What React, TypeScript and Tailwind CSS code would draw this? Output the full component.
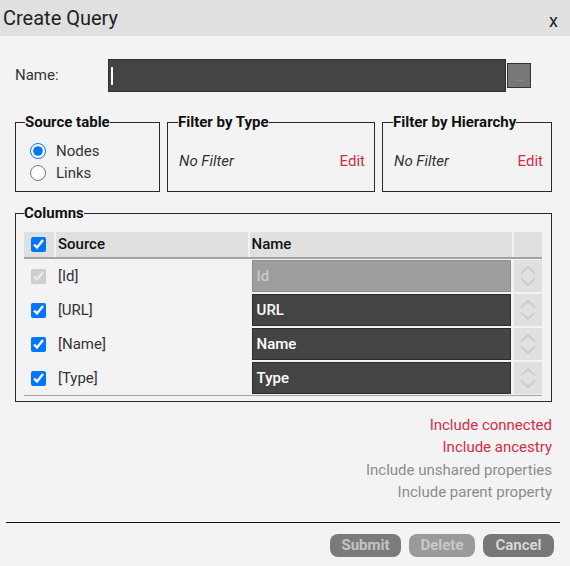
import React from "react";

function Spinner() {
  return (
    <svg width="18" height="24" viewBox="0 0 18 24" fill="none">
      <path d="M2 9.5 L9 3 L16 9.5" stroke="#c8c8c8" strokeWidth="1.5" />
      <path d="M2 14.5 L9 21 L16 14.5" stroke="#c8c8c8" strokeWidth="1.5" />
    </svg>
  );
}

const rows = [
  { src: "[Id]", name: "Id", disabled: true },
  { src: "[URL]", name: "URL", disabled: false },
  { src: "[Name]", name: "Name", disabled: false },
  { src: "[Type]", name: "Type", disabled: false },
];

export default function App() {
  return (
    <div className="w-[570px] h-[566px] bg-[#f3f3f3] font-['Roboto',sans-serif] text-[#222] flex flex-col">
      <div className="h-[36px] bg-[#e0e0e0] flex items-center justify-between pl-[3px] pr-[12px]">
        <span className="text-[20px] leading-none text-[#222]">Create Query</span>
        <span className="text-[18px] leading-none mt-[5px] text-[#222]">x</span>
      </div>

      <div className="px-[15px] flex flex-col">
        {/* Name row */}
        <div className="mt-[23px] flex items-center h-[33px]">
          <span className="w-[93px] text-[15px] text-[#333]">Name:</span>
          <div className="w-[398px] h-[33px] bg-[#444] border border-[#2e2e2e] flex items-center pl-[2px]">
            <div className="w-[2px] h-[18px] bg-white" />
          </div>
          <div className="ml-[1px] w-[24px] h-[25px] bg-[#777] border border-[#333] flex items-end justify-center pb-[4px]">
            <span className="text-[8px] leading-none text-[#bbb] tracking-[1px]">...</span>
          </div>
        </div>

        {/* Filters row */}
        <div className="mt-[22px] flex gap-[7px]">
          <fieldset className="w-[145px] h-[78px] border border-[#2a2a2a]">
            <legend className="ml-[9px] text-[15px] font-bold leading-[16px] text-[#111]">Source table</legend>
            <div className="pt-[10px] pl-[14px] flex flex-col">
              <label className="h-[22px] flex items-center gap-[10px] text-[15px] text-[#333]">
                <input type="radio" name="src" defaultChecked className="w-[16px] h-[16px] m-0" />
                Nodes
              </label>
              <label className="h-[22px] flex items-center gap-[10px] text-[15px] text-[#333]">
                <input type="radio" name="src" className="w-[16px] h-[16px] m-0" />
                Links
              </label>
            </div>
          </fieldset>
          <fieldset className="w-[208px] h-[78px] border border-[#2a2a2a]">
            <legend className="ml-[10px] text-[15px] font-bold leading-[16px] text-[#111]">Filter by Type</legend>
            <div className="h-[61px] flex items-center justify-between pl-[11px] pr-[9px] text-[15px] pt-[2px]">
              <span className="italic text-[#333]">No Filter</span>
              <span className="text-[#d22d47]">Edit</span>
            </div>
          </fieldset>
          <fieldset className="w-[170px] h-[78px] border border-[#2a2a2a]">
            <legend className="ml-[10px] text-[15px] font-bold leading-[16px] text-[#111]">Filter by Hierarchy</legend>
            <div className="h-[61px] flex items-center justify-between pl-[11px] pr-[8px] text-[15px] pt-[2px]">
              <span className="italic text-[#333]">No Filter</span>
              <span className="text-[#d22d47]">Edit</span>
            </div>
          </fieldset>
        </div>

        {/* Columns */}
        <fieldset className="mt-[13px] w-[537px] h-[197px] border border-[#2a2a2a]">
          <legend className="ml-[8px] text-[15px] font-bold leading-[16px] text-[#111]">Columns</legend>
          <div className="pt-[11px] pl-[8px] w-[526px] flex flex-col">
            <div className="h-[25px] flex gap-[2px] text-[15px] font-medium text-[#111]">
              <div className="w-[30px] bg-[#e0e0e0] flex items-center pl-[7px]">
                <input type="checkbox" defaultChecked className="w-[15px] h-[15px] m-0" />
              </div>
              <div className="w-[192px] bg-[#e0e0e0] flex items-center pl-[2px]">Source</div>
              <div className="w-[263px] bg-[#e0e0e0] flex items-center pl-[2px]">Name</div>
              <div className="w-[28px] bg-[#e0e0e0]" />
            </div>
            <div className="h-[2px] w-[518px] bg-[#a3a3a3]" />
            <div className="mt-[1px] flex flex-col gap-[2px]">
              {rows.map((r) => (
                <div key={r.src} className="h-[32px] flex gap-[2px] text-[15px]">
                  <div className="w-[30px] flex items-center pl-[7px]">
                    <input
                      type="checkbox"
                      defaultChecked
                      disabled={r.disabled}
                      className="w-[15px] h-[15px] m-0"
                    />
                  </div>
                  <div className="w-[192px] flex items-center pl-[2px] text-[#333]">{r.src}</div>
                  <div className="w-[263px] flex items-center pl-[2px]">
                    <div
                      className={
                        r.disabled
                          ? "w-[259px] h-[32px] bg-[#9e9e9e] border border-[#8e8e8e] flex items-center pl-[4px] font-medium text-[#c9c9c9]"
                          : "w-[259px] h-[32px] bg-[#444] border border-[#2b2b2b] flex items-center pl-[4px] font-medium text-white"
                      }
                    >
                      {r.name}
                    </div>
                  </div>
                  <div className="w-[28px] bg-[#e0e0e0] flex items-center justify-center">
                    <Spinner />
                  </div>
                </div>
              ))}
            </div>
            <div className="mt-[1px] h-[1px] w-[518px] bg-[#a3a3a3]" />
          </div>
        </fieldset>

        {/* Include links */}
        <div className="mt-[12px] w-[537px] flex flex-col items-end text-[15px] leading-[22.3px]">
          <span className="text-[#d22d47]">Include connected</span>
          <span className="text-[#d22d47]">Include ancestry</span>
          <span className="text-[#8c8c8c]">Include unshared properties</span>
          <span className="text-[#8c8c8c]">Include parent property</span>
        </div>
      </div>

      <div className="mt-[19px] ml-[6px] w-[554px] h-[1px] bg-[#111]" />

      <div className="mt-[11px] flex justify-end gap-[8px] pr-[16px]">
        <div className="w-[71px] h-[23px] rounded-[8px] bg-[#7b7b7b] flex items-center justify-center text-[15px] font-bold text-[#c4c4c4]">Submit</div>
        <div className="w-[66px] h-[23px] rounded-[8px] bg-[#9a9a9a] flex items-center justify-center text-[15px] font-bold text-[#c9c9c9]">Delete</div>
        <div className="w-[71px] h-[23px] rounded-[8px] bg-[#777] flex items-center justify-center text-[15px] font-bold text-[#d6d6d6]">Cancel</div>
      </div>
    </div>
  );
}
